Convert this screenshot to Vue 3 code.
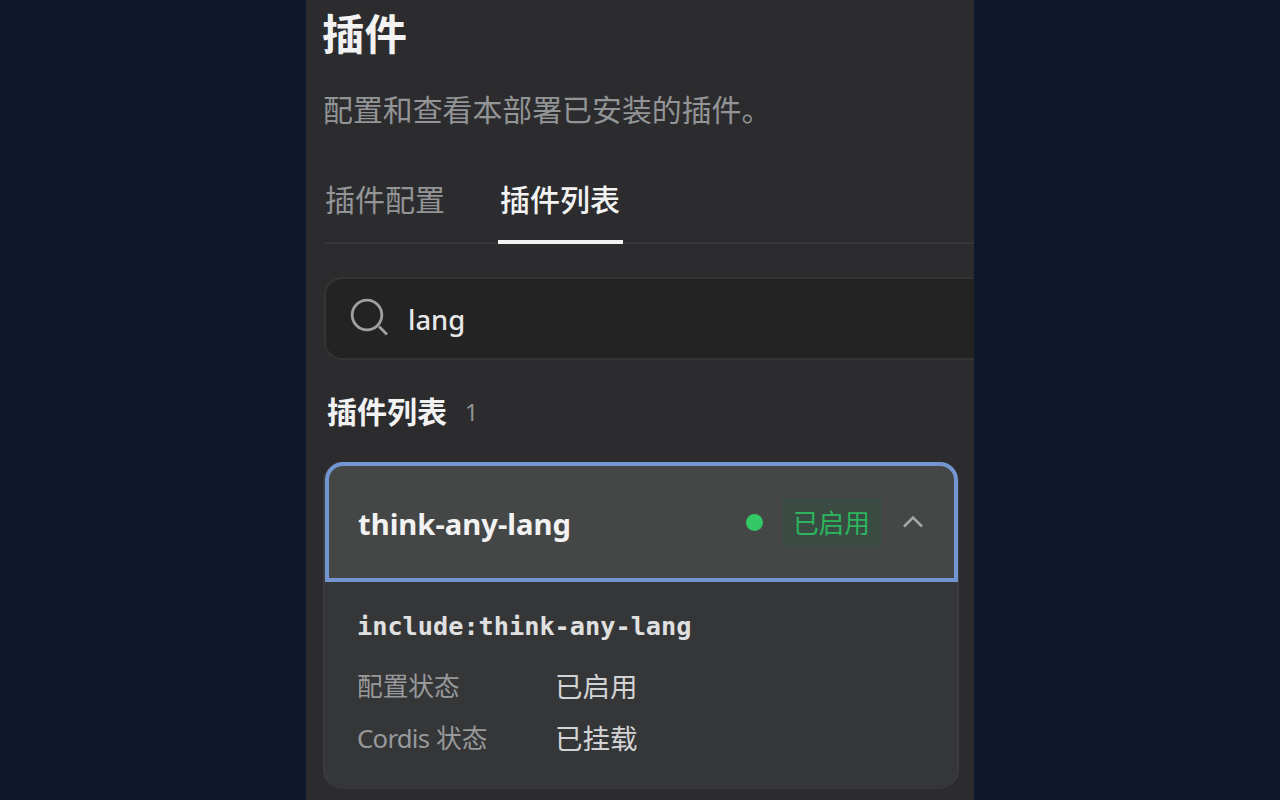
<template>
  <div class="backdrop">
    <main class="panel">
      <h1>插件</h1>
      <p class="intro">配置和查看本部署已安装的插件。</p>

      <nav class="tabs">
        <button
          v-for="tab in tabs"
          :key="tab"
          :class="{ active: tab === activeTab }"
          @click="activeTab = tab"
        >{{ tab }}</button>
      </nav>

      <label class="search">
        <svg width="40" height="40" viewBox="0 0 40 40">
          <circle cx="17" cy="17" r="14.8" />
          <path d="M29 28.5 37 36.5" />
        </svg>
        <input v-model="query" type="text" />
      </label>

      <h2>插件列表 <span class="count">{{ filtered.length }}</span></h2>

      <section v-for="plugin in filtered" :key="plugin.name" class="card">
        <button class="card-head" @click="expanded = !expanded">
          <span class="name">{{ plugin.name }}</span>
          <span class="dot"></span>
          <span class="badge">{{ plugin.config }}</span>
          <svg class="chevron" :class="{ closed: !expanded }" width="22" height="14" viewBox="0 0 22 14">
            <path d="M2 11.5 11 2.5l9 9" />
          </svg>
        </button>
        <div v-if="expanded" class="card-body">
          <code>include:{{ plugin.name }}</code>
          <dl>
            <dt>配置状态</dt>
            <dd>{{ plugin.config }}</dd>
            <dt><span class="latin">Cordis</span> 状态</dt>
            <dd>{{ plugin.cordis }}</dd>
          </dl>
        </div>
      </section>
    </main>
  </div>
</template>

<script setup>
import { ref, computed } from 'vue'

const tabs = ['插件配置', '插件列表']
const activeTab = ref('插件列表')
const query = ref('lang')
const expanded = ref(true)

const plugins = [
  { name: 'think-any-lang', config: '已启用', cordis: '已挂载' }
]

const filtered = computed(() => plugins.filter(p => p.name.includes(query.value)))
</script>

<style>
body {
  margin: 0;
  background: #0f172a;
}
</style>

<style scoped>
* {
  box-sizing: border-box;
}

.backdrop {
  height: 800px;
  display: flex;
  justify-content: center;
  overflow: hidden;
  background: #0f172a;
  font-family: 'Noto Sans', 'Noto Sans CJK SC', sans-serif;
}

.panel {
  width: 668px;
  height: 800px;
  padding-left: 18px;
  overflow: hidden;
  background: #2c2c2e;
  color: #f2f2f3;
}

h1 {
  margin: 4px 0 0 -2px;
  font-size: 42.5px;
  line-height: 60px;
  font-weight: 700;
}

.intro {
  margin: 26px 0 0 -1px;
  font-size: 29.9px;
  line-height: 40px;
  color: #929496;
}

button {
  padding: 0;
  border: 0;
  background: none;
  font: inherit;
  color: inherit;
}

.tabs {
  display: flex;
  gap: 51px;
  height: 71px;
  margin: 43px 0 0 1px;
  border-bottom: 2px solid #363638;
}

.tabs button {
  height: 71px;
  padding: 7px 2px 20px 0;
  font-size: 30px;
  line-height: 40px;
  color: #929496;
  border-bottom: 4px solid transparent;
}

.tabs button.active {
  padding: 7px 3px 20px 2px;
  font-weight: 500;
  color: #f2f2f3;
  border-bottom-color: #f2f2f3;
}

.search {
  display: flex;
  align-items: center;
  width: 680px;
  height: 83px;
  margin-top: 33px;
  padding-left: 24px;
  background: #232323;
  border: 2px solid #343434;
  border-radius: 18px;
}

.search svg {
  flex: none;
  margin-top: -1px;
  fill: none;
  stroke: #a0a0a0;
  stroke-width: 2.8;
}

.search input {
  width: 400px;
  height: 40px;
  margin: 1px 0 0 18px;
  padding: 0;
  border: 0;
  outline: 0;
  background: none;
  font: 500 27.4px 'Noto Sans', sans-serif;
  color: #e8e8e8;
}

h2 {
  display: flex;
  align-items: center;
  gap: 18px;
  margin: 32px 0 0 3px;
  font-size: 30px;
  line-height: 40px;
  font-weight: 700;
}

.count {
  font-size: 23px;
  font-weight: 400;
  color: #929496;
}

.card {
  width: 636px;
  height: 327px;
  margin-top: 30px;
  margin-left: -1px;
  border: 2px solid #3b3c3e;
  border-top: 0;
  border-bottom-color: #353638;
  border-radius: 20px;
  background: #353638;
}

.card-head {
  display: flex;
  align-items: center;
  width: 633px;
  height: 120px;
  padding: 0 30px 0 29px;
  border: 4px solid #7396d2;
  border-radius: 18px 18px 0 0;
  background: #454747;
}

.name {
  flex: 1;
  padding-top: 4px;
  text-align: left;
  font-size: 29.2px;
  font-weight: 700;
}

.dot {
  width: 17px;
  height: 17px;
  border-radius: 50%;
  background: #34c765;
}

.badge {
  height: 49px;
  margin: 0 20px 0 19px;
  padding: 0 12px 0 11px;
  border-radius: 5px;
  background: #394b43;
  font-size: 25.7px;
  line-height: 51px;
  color: #2cb55d;
}

.chevron {
  fill: none;
  stroke: #a3a4a4;
  stroke-width: 2.6;
}

.chevron.closed {
  transform: rotate(180deg);
}

.card-body {
  padding: 25px 32px;
}

code {
  display: block;
  font-family: 'DejaVu Sans Mono', monospace;
  font-size: 25.25px;
  line-height: 40px;
  font-weight: 700;
  color: #e0e0e1;
}

dl {
  display: grid;
  grid-template-columns: 198px 1fr;
  row-gap: 12px;
  margin: 20px 0 0;
  line-height: 40px;
}

dt {
  font-size: 25.7px;
  color: #98999b;
}

.latin {
  letter-spacing: -0.7px;
}

dd {
  margin: 0;
  font-size: 27.5px;
  color: #d2d3d4;
}
</style>
